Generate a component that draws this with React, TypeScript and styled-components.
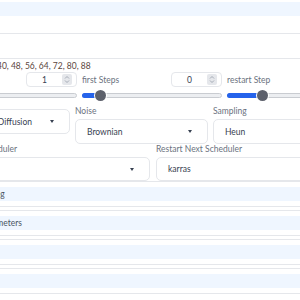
import React from "react";
import styled, { createGlobalStyle } from "styled-components";

const GlobalStyle = createGlobalStyle`
  html, body {
    margin: 0;
    padding: 0;
    background: #ffffff;
  }
  body {
    width: 300px;
    height: 300px;
    overflow: hidden;
    font-family: "Lato", "Liberation Sans", sans-serif;
    color: #374151;
  }
`;

const Viewport = styled.div`
  width: 300px;
  height: 300px;
  overflow: hidden;
`;

// the screenshot is a crop of a wider panel, so the panel starts left of the viewport
const Panel = styled.div`
  margin-left: -63px;
  width: 440px;
  padding-top: 2px;
`;

const TopBar = styled.div`
  height: 14px;
  background: #eff6ff;
`;

const FieldStrip = styled.div<{ $h: number }>`
  height: ${(p) => p.$h}px;
  border-bottom: 1px solid #e5e7eb;
`;

const Info = styled.div`
  margin-top: 2px;
  font-size: 8.5px;
  line-height: 11px;
  color: #5b4640;
  white-space: nowrap;
`;

const SliderRow = styled.div`
  display: grid;
  grid-template-columns: 140px 140px 140px;
  column-gap: 5px;
`;

const SliderCol = styled.div`
  display: flex;
  flex-direction: column;
`;

const SliderHead = styled.div`
  display: flex;
  align-items: center;
  justify-content: space-between;
  height: 15px;
`;

const Label = styled.span`
  font-size: 8.5px;
  line-height: 10px;
  color: #6b7280;
  white-space: nowrap;
`;

const NumberBox = styled.div`
  box-sizing: border-box;
  width: 51px;
  height: 15px;
  border: 1px solid #e5e7eb;
  border-radius: 4px;
  display: flex;
  align-items: center;
  padding-right: 4px;
`;

const NumberValue = styled.span`
  flex: 1;
  text-align: center;
  font-size: 8.5px;
  color: #374151;
`;

const Spinner = styled.div`
  width: 10px;
  height: 11px;
  background: #e5e7eb;
  border-radius: 2px;
  display: flex;
  align-items: center;
  justify-content: center;
`;

const Track = styled.div`
  position: relative;
  margin-top: 6px;
  height: 3px;
  border: 1px solid #c9ccd1;
  border-radius: 3px;
  background: #eceef1;
`;

const Fill = styled.div`
  position: absolute;
  left: -1px;
  top: -1px;
  height: 5px;
  border-radius: 3px;
  background: #2563eb;
`;

const Thumb = styled.div`
  position: absolute;
  top: 50%;
  width: 11px;
  height: 11px;
  margin-left: -5.5px;
  margin-top: -5.5px;
  border-radius: 50%;
  background: #5d616c;
  box-shadow: 0 0 0 1px #ffffff;
`;

const SelectRow = styled.div<{ $cols: string; $gap: number; $top: number }>`
  display: grid;
  grid-template-columns: ${(p) => p.$cols};
  column-gap: ${(p) => p.$gap}px;
  margin-top: ${(p) => p.$top}px;
`;

const SelectCol = styled.div`
  display: flex;
  flex-direction: column;
  gap: 3px;
`;

const SelectBox = styled.div<{ $h: number }>`
  box-sizing: border-box;
  height: ${(p) => p.$h}px;
  border: 1px solid #e5e7eb;
  border-radius: 5px;
  display: flex;
  align-items: center;
  justify-content: space-between;
  padding: 0 15px 0 11px;
  font-size: 8.5px;
  color: #374151;
  white-space: nowrap;
`;

const Caret = styled.span`
  width: 0;
  height: 0;
  border-left: 2.5px solid transparent;
  border-right: 2.5px solid transparent;
  border-top: 3px solid #374151;
`;

const AccordionList = styled.div`
  display: flex;
  flex-direction: column;
  gap: 3px;
`;

const Accordion = styled.div`
  border-top: 1px solid #e5e7eb;
  border-bottom: 1px solid #e5e7eb;
  padding: 5px 0;
`;

const AccordionHead = styled.div`
  height: 14px;
  background: #eff6ff;
  display: flex;
  align-items: center;
  padding-left: 14px;
  font-size: 8.5px;
  color: #4b5563;
  white-space: nowrap;
`;

const Chevrons = () => (
  <svg width="6" height="9" viewBox="0 0 6 9" fill="none" stroke="#9ca3af" strokeWidth="0.9">
    <path d="M1 3.5 L3 1.5 L5 3.5" />
    <path d="M1 5.5 L3 7.5 L5 5.5" />
  </svg>
);

const Slider = ({ label, value, pct }: { label?: string; value?: string; pct: number }) => (
  <SliderCol>
    <SliderHead>
      <Label>{label}</Label>
      {value !== undefined && (
        <NumberBox>
          <NumberValue>{value}</NumberValue>
          <Spinner>
            <Chevrons />
          </Spinner>
        </NumberBox>
      )}
    </SliderHead>
    <Track>
      <Fill style={{ width: `${pct}%` }} />
      <Thumb style={{ left: `${pct}%` }} />
    </Track>
  </SliderCol>
);

const Select = ({ label, value, h, caret = true }: { label: string; value: string; h: number; caret?: boolean }) => (
  <SelectCol>
    <Label>{label}</Label>
    <SelectBox $h={h}>
      <span>{value}</span>
      {caret && <Caret />}
    </SelectBox>
  </SelectCol>
);

export default function App() {
  return (
    <Viewport>
      <GlobalStyle />
      <Panel>
        <TopBar />
        <FieldStrip $h={17} />
        <FieldStrip $h={24} />
        <Info>0, 8, 16, 24, 32, 40, 48, 56, 64, 72, 80, 88</Info>
        <SliderRow>
          <Slider label="" value="1" pct={-10} />
          <Slider label="first Steps" value="0" pct={13} />
          <Slider label="restart Step" pct={25} />
        </SliderRow>
        <SelectRow $cols="133px 133px 133px" $gap={5} $top={8}>
          <Select label="" value="Stable Video Diffusion" h={25} />
          <Select label="Noise" value="Brownian" h={25} />
          <Select label="Sampling" value="Heun" h={25} />
        </SelectRow>
        <SelectRow $cols="213px 213px" $gap={6} $top={0}>
          <Select label="Restart Init Scheduler" value="" h={24} />
          <Select label="Restart Next Scheduler" value="karras" h={24} />
        </SelectRow>
        <AccordionList>
          <Accordion>
            <AccordionHead>Restart Timing</AccordionHead>
          </Accordion>
          <Accordion>
            <AccordionHead>Restart Parameters</AccordionHead>
          </Accordion>
          <Accordion>
            <AccordionHead />
          </Accordion>
          <Accordion>
            <AccordionHead />
          </Accordion>
        </AccordionList>
      </Panel>
    </Viewport>
  );
}
